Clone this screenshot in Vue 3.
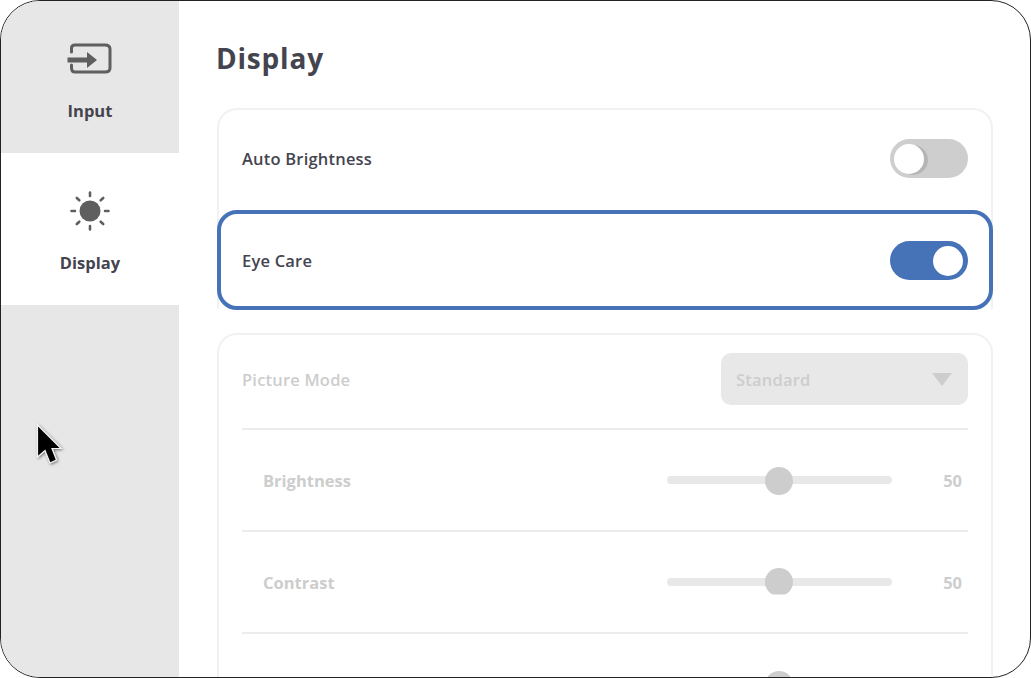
<template>
  <div class="screen">
    <aside class="side">
      <div class="tab">
        <svg class="tab-icon" width="46" height="34" viewBox="0 0 46 34">
          <path d="M4.500 10V6Q4.500 3 8 3H38Q43 3 43 7V26Q43 30 38 30H8Q4.500 30 4.500 26V23" fill="none" stroke="#5f5f5f" stroke-width="3" stroke-linecap="round" />
          <path d="M0.500 15.500H20V10L30 18L20 26V20.500H0.500Z" fill="#5f5f5f" />
        </svg>
        <span>Input</span>
      </div>
      <div class="tab active">
        <svg class="tab-icon" width="42" height="42" viewBox="0 0 42 42">
          <circle cx="21" cy="21" r="10.500" fill="#5f5f5f" />
          <g stroke="#5f5f5f" stroke-width="2.600" stroke-linecap="round">
            <path d="M21 2.500V6M21 36V39.500M2.500 21H6M36 21H39.500" />
            <path d="M7.800 8L10.300 10.300M31.700 31.700L34.200 34M7.800 34L10.300 31.700M31.700 10.300L34.200 8" />
          </g>
        </svg>
        <span>Display</span>
      </div>
    </aside>

    <main class="main">
      <h1>Display</h1>

      <section class="card top-card">
        <div class="row switch-row">
          <span class="label">Auto Brightness</span>
          <span class="toggle"><i></i></span>
        </div>
        <div class="row switch-row focused">
          <span class="label">Eye Care</span>
          <span class="toggle on"><i></i></span>
        </div>
      </section>

      <section class="card muted">
        <div class="mode-row">
          <span class="mode-label">Picture Mode</span>
          <div class="select">
            <span>Standard</span>
            <b class="arrow"></b>
          </div>
        </div>
        <div v-for="s in sliders" :key="s.name" class="slider-row">
          <span class="slider-name">{{ s.name }}</span>
          <div class="slider-wrap">
            <div class="track"><i class="thumb"></i></div>
          </div>
          <span class="value">{{ s.value }}</span>
        </div>
      </section>
    </main>

    <svg class="pointer" width="30" height="46" viewBox="0 0 30 46">
      <defs>
        <filter id="soft" x="-40%" y="-40%" width="180%" height="180%">
          <feDropShadow dx="1" dy="1" stdDeviation="1.600" flood-color="#000" flood-opacity="0.55" />
        </filter>
      </defs>
      <path d="M2.500 3V35L10 28.500L15 41L21.500 38L17 26.500H26Z" fill="#000" stroke="#f4f4f4" stroke-width="1.200" filter="url(#soft)" />
    </svg>
  </div>
</template>

<script setup>
const sliders = [
  { name: 'Brightness', value: 50 },
  { name: 'Contrast', value: 50 },
  { name: '', value: '' }
]
</script>

<style scoped>
.screen {
  position: relative;
  display: flex;
  box-sizing: border-box;
  width: 1031px;
  height: 678px;
  overflow: hidden;
  background: #fff;
  border: 1px solid #222;
  border-radius: 40px;
  font-family: "Open Sans", sans-serif;
  color: #44444f;
}

.side {
  flex: 0 0 178px;
  background: #e7e7e7;
}

.tab {
  display: flex;
  flex-direction: column;
  align-items: center;
  height: 152px;
  padding-top: 41px;
  box-sizing: border-box;
  font-size: 16.500px;
  font-weight: 700;
}

.tab span {
  margin-top: 23px;
  line-height: 24px;
}

.tab.active {
  background: #fff;
  padding-top: 37px;
}

.tab.active span {
  margin-top: 19px;
}

.tab-icon {
  display: block;
}

.main {
  flex: 1;
  padding: 0 37px 0 38px;
  min-width: 0;
}

h1 {
  margin: 37px 0 30px -1px;
  font-size: 28px;
  line-height: 40px;
  font-weight: 700;
  letter-spacing: 0.8px;
}

.card {
  box-sizing: border-box;
  border: 2px solid #f1f1f1;
  border-radius: 20px;
}

.top-card {
  margin-bottom: 24px;
  border-bottom: 0;
  border-radius: 20px 20px 0 0;
  height: 201px;
}

.switch-row {
  display: flex;
  align-items: center;
  justify-content: space-between;
  box-sizing: border-box;
  height: 96px;
  padding: 0 23px;
}

.focused {
  height: 100px;
  margin: 4px -2px 0;
  padding: 0 21px;
  border: 4px solid #4672b8;
  border-radius: 20px;
  background: #fff;
}

.label,
.mode-label,
.select {
  font-size: 16.500px;
  font-weight: 600;
  letter-spacing: 0.2px;
}

.toggle {
  position: relative;
  display: block;
  width: 78px;
  height: 39px;
  border-radius: 20px;
  background: #cecece;
}

.toggle i {
  position: absolute;
  left: 4px;
  top: 5px;
  width: 30px;
  height: 30px;
  border-radius: 50%;
  background: #fff;
  box-shadow: 4px 1px 0 #b5b5b5;
}

.toggle.on {
  background: #4672b8;
}

.toggle.on i {
  left: 43px;
  box-shadow: none;
}

.muted {
  color: #cdcdcd;
  padding: 0 23px;
}

.mode-row {
  display: flex;
  align-items: center;
  justify-content: space-between;
  box-sizing: border-box;
  height: 95px;
  padding-bottom: 5px;
  border-bottom: 2px solid #ececec;
}

.select {
  display: flex;
  align-items: center;
  justify-content: space-between;
  box-sizing: border-box;
  width: 247px;
  height: 52px;
  padding: 0 16px 0 15px;
  border-radius: 10px;
  background: #e8e8e8;
}

.arrow {
  width: 0;
  height: 0;
  border-left: 10px solid transparent;
  border-right: 10px solid transparent;
  border-top: 13px solid #cdcdcd;
}

.slider-row {
  display: flex;
  align-items: center;
  box-sizing: border-box;
  height: 102px;
  padding: 0 5px 0 21px;
  border-bottom: 2px solid #ececec;
  font-size: 16.500px;
  font-weight: 700;
}

.slider-name {
  flex: 0 0 404px;
}

.slider-wrap {
  flex: 0 0 225px;
}

.track {
  position: relative;
  height: 8px;
  margin-top: -1px;
  border-radius: 4px;
  background: #e8e8e8;
}

.thumb {
  position: absolute;
  left: 98px;
  top: -9px;
  width: 28px;
  height: 28px;
  border-radius: 50%;
  background: #cdcdcd;
}

.slider-row:nth-child(3) .thumb {
  top: -10px;
  clip-path: inset(0 0 1px 0);
}

.value {
  flex: 1;
  padding-right: 1px;
  text-align: right;
  font-size: 16.500px;
}

.pointer {
  position: absolute;
  left: 34px;
  top: 421px;
}
</style>

<style>
html, body {
  background: #fff;
  overflow: hidden;
}
</style>
